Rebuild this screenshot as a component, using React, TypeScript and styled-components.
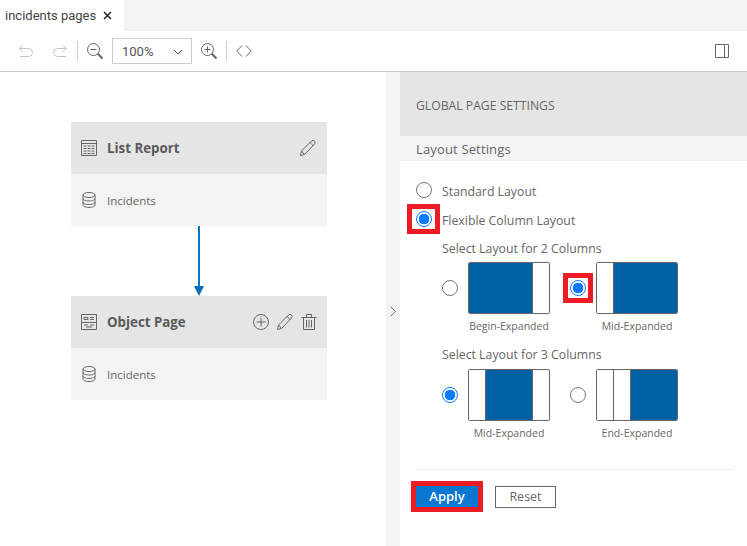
import styled, { createGlobalStyle } from 'styled-components';

const GlobalStyle = createGlobalStyle`
  html, body {
    margin: 0;
    padding: 0;
    height: 100%;
    background: #fff;
    overflow: hidden;
  }
  #root {
    height: 100%;
  }
`;

const Page = styled.div`
  width: 747px;
  height: 546px;
  display: flex;
  flex-direction: column;
  font-family: 'Open Sans', 'Noto Sans', sans-serif;
  color: #666;
`;

const TabStrip = styled.div`
  height: 31px;
  background: #f3f3f3;
  display: flex;
`;

const Tab = styled.div`
  width: 124px;
  box-sizing: border-box;
  background: #fff;
  padding-left: 5px;
  display: flex;
  align-items: center;
  gap: 7px;
  font-family: Roboto, sans-serif;
  font-size: 13px;
  color: #444;
`;

const Toolbar = styled.div`
  height: 41px;
  flex: none;
  box-sizing: border-box;
  padding: 0 8px 0 9px;
  display: flex;
  align-items: center;
  border-bottom: 1px solid #ccc;
`;

const ToolButton = styled.div<{ $end?: boolean }>`
  width: 34px;
  height: 26px;
  display: flex;
  align-items: center;
  justify-content: center;
  margin-left: ${(p) => (p.$end ? 'auto' : '0')};
`;

const Separator = styled.div`
  width: 1px;
  height: 20px;
  background: #ccc;
`;

const ZoomSelect = styled.div`
  width: 80px;
  height: 26px;
  box-sizing: border-box;
  border: 1px solid #ccc;
  display: flex;
  align-items: center;
  justify-content: space-between;
  padding: 1px 8px 0 9px;
  font-family: Roboto, sans-serif;
  font-size: 13px;
  color: #555;
`;

const Workspace = styled.div`
  flex: 1;
  display: flex;
  min-height: 0;
`;

const Canvas = styled.div`
  width: 386px;
  box-sizing: border-box;
  padding: 50px 59px 0 71px;
  display: flex;
  flex-direction: column;
`;

const Card = styled.div`
  width: 256px;
  background: #f3f3f3;
`;

const CardHead = styled.div`
  height: 52px;
  background: #e5e5e5;
  box-sizing: border-box;
  padding: 0 10px 0 10px;
  display: flex;
  align-items: center;
`;

const CardTitle = styled.div`
  margin-left: 10px;
  font-size: 13.3px;
  font-weight: 700;
  color: #5a5a5a;
  flex: 1;
`;

const CardActions = styled.div`
  display: flex;
  align-items: center;
  gap: 7px;
`;

const CardBody = styled.div`
  height: 52px;
  box-sizing: border-box;
  padding: 0 10px 0 11px;
  display: flex;
  align-items: center;
  gap: 11px;
  font-size: 11.5px;
  color: #666;
`;

const Connector = styled.div`
  width: 256px;
  height: 70px;
  display: flex;
  flex-direction: column;
  align-items: center;
`;

const ConnectorLine = styled.div`
  width: 2px;
  flex: 1;
  background: #0a78c8;
`;

const ConnectorHead = styled.div`
  width: 0;
  height: 0;
  border-left: 5px solid transparent;
  border-right: 5px solid transparent;
  border-top: 10px solid #0a6cb8;
`;

const Splitter = styled.div`
  width: 14px;
  background: #f3f3f3;
  display: flex;
  align-items: center;
  justify-content: center;
  padding-top: 4px;
  box-sizing: border-box;
`;

const Panel = styled.div`
  flex: 1;
  display: flex;
  flex-direction: column;
`;

const PanelHead = styled.div`
  height: 64px;
  box-sizing: border-box;
  background: #e5e5e5;
  padding: 2px 0 0 16px;
  display: flex;
  align-items: center;
  font-size: 12.2px;
  color: #666;
`;

const SectionHead = styled.div`
  height: 25px;
  background: #f3f3f3;
  padding-left: 16px;
  display: flex;
  align-items: center;
  font-size: 13px;
  letter-spacing: 0.15px;
  color: #666;
`;

const Form = styled.div`
  padding: 21px 13px 0 16px;
  display: flex;
  flex-direction: column;
`;

const RadioRow = styled.div<{ $gapTop?: number }>`
  height: 16px;
  margin-top: ${(p) => p.$gapTop ?? 0}px;
  display: flex;
  align-items: center;
  gap: 10px;
  font-size: 12.3px;
  color: #666;
`;

const RowText = styled.span`
  padding-top: 2px;
`;

const Radio = styled.span<{ $checked?: boolean }>`
  width: 16px;
  height: 16px;
  box-sizing: border-box;
  border-radius: 50%;
  flex: none;
  border: 1px solid ${(p) => (p.$checked ? '#0a7bff' : '#777')};
  background: ${(p) =>
    p.$checked ? 'radial-gradient(circle, #0a7bff 0 5px, #fff 5.6px)' : '#fff'};
`;

const Marked = styled.span<{ $left: number; $right: number }>`
  position: relative;
  display: flex;
  flex: none;

  &::before {
    content: '';
    position: absolute;
    top: -7px;
    bottom: -7px;
    left: -${(p) => p.$left}px;
    right: -${(p) => p.$right}px;
    border: 5px solid #ed1c24;
  }
`;

const LayoutGroup = styled.div<{ $top: number }>`
  margin: ${(p) => p.$top}px 0 0 26px;
`;

const GroupTitle = styled.div`
  height: 20px;
  line-height: 21px;
  font-size: 12.3px;
  color: #666;
`;

const OptionRow = styled.div<{ $top: number }>`
  margin-top: ${(p) => p.$top}px;
  display: flex;
  gap: 20px;
`;

const Option = styled.div`
  display: grid;
  grid-template-columns: 16px 82px;
  column-gap: 10px;
  row-gap: 4px;
  align-items: center;
`;

const OptionLabel = styled.div`
  grid-column: 2;
  font-size: 10.5px;
  line-height: 16px;
  text-align: center;
  white-space: nowrap;
  color: #666;
`;

const Thumb = styled.div`
  width: 82px;
  height: 52px;
  box-sizing: border-box;
  border: 1px solid #666;
  border-radius: 2px;
  display: flex;
  overflow: hidden;
  background: #fff;
`;

const Column = styled.div<{ $filled?: boolean }>`
  flex: ${(p) => (p.$filled ? 1 : '0 0 16px')};
  background: ${(p) => (p.$filled ? '#0062a5' : '#fff')};

  & + & {
    border-left: 1px solid #666;
  }
`;

const Footer = styled.div`
  margin-top: 28px;
  padding-top: 16px;
  border-top: 1px solid #eee;
  display: flex;
  align-items: flex-start;
  gap: 17px;
`;

const ApplyButton = styled.div`
  width: 62px;
  height: 21px;
  background: #0a78d0;
  color: #fff;
  font-size: 13px;
  font-weight: 600;
  text-align: center;
  line-height: 21px;
  box-shadow: 0 0 0 5px #ed1c24;
`;

const ResetButton = styled.div`
  width: 61px;
  height: 22px;
  box-sizing: border-box;
  border: 1px solid #666;
  font-size: 12.5px;
  text-align: center;
  line-height: 20px;
  color: #666;
`;

const Icon = styled.svg`
  display: block;
  fill: none;
  stroke: currentColor;
  stroke-width: 1;
  flex: none;
`;

const MutedIcon = styled(Icon)`
  color: #c4c4c4;
`;

function UndoIcon() {
  return (
    <MutedIcon width="16" height="14" viewBox="0 0 16 14">
      <path d="M5 1 1.500 4.500 5 8M1.500 4.500h9a4 4 0 0 1 0 8H2" />
    </MutedIcon>
  );
}

function RedoIcon() {
  return (
    <MutedIcon width="16" height="14" viewBox="0 0 16 14">
      <path d="M11 1l3.500 3.500L11 8M14.500 4.500h-9a4 4 0 0 0 0 8H14" />
    </MutedIcon>
  );
}

function ZoomIcon({ plus }: { plus?: boolean }) {
  return (
    <Icon width="18" height="18" viewBox="0 0 18 18" style={{ color: '#666' }}>
      <circle cx="7.500" cy="7.500" r="6" />
      <path d="M4.500 7.500h6" />
      {plus && <path d="M7.500 4.500v6" />}
      <path d="M11.800 11.800 16.500 16.500" strokeWidth="2" />
    </Icon>
  );
}

function CodeIcon() {
  return (
    <Icon width="16" height="14" viewBox="0 0 16 14" style={{ color: '#666' }}>
      <path d="M6 1.500 .8 7 6 12.500M10 1.500 15.200 7 10 12.500" />
    </Icon>
  );
}

function PanelIcon() {
  return (
    <Icon width="14" height="14" viewBox="0 0 14 14" style={{ color: '#666' }}>
      <path d="M.5.500h13v13H.5zM9.500.500v13" />
    </Icon>
  );
}

function CloseIcon() {
  return (
    <Icon width="9" height="9" viewBox="0 0 9 9" style={{ color: '#222' }}>
      <path d="M1 1l7 7M8 1 1 8" strokeWidth="1.500" />
    </Icon>
  );
}

function ChevronDown() {
  return (
    <Icon width="10" height="6" viewBox="0 0 10 6" style={{ color: '#555' }}>
      <path d="M1 1l4 4 4-4" />
    </Icon>
  );
}

function ChevronRight() {
  return (
    <Icon width="6" height="11" viewBox="0 0 6 11" style={{ color: '#777' }}>
      <path d="M.7.700 5.300 5.500.7 10.300" />
    </Icon>
  );
}

function TableIcon() {
  return (
    <Icon width="16" height="16" viewBox="0 0 16 16">
      <path d="M.5.500h15v15H.5zM.5 3.500h15" />
      <path d="M2.500 6h11M2.500 8.500h11M2.500 11h11M2.500 13.500h11" strokeDasharray="3 1" />
    </Icon>
  );
}

function ObjectPageIcon() {
  return (
    <Icon width="16" height="16" viewBox="0 0 16 16">
      <path d="M.5.500h15v15H.5zM.5 8.500h15M3 3.500h4v2H3zM9 3.500h4M9 5.500h4M3 11h4M9 11h4M5 13h6" />
    </Icon>
  );
}

function DatabaseIcon() {
  return (
    <Icon width="14" height="16" viewBox="0 0 14 16">
      <ellipse cx="7" cy="3" rx="6" ry="2.500" />
      <path d="M1 3v10c0 1.400 2.700 2.500 6 2.500s6-1.100 6-2.500V3M1 6.500c0 1.400 2.700 2.500 6 2.500s6-1.100 6-2.500M1 10c0 1.400 2.700 2.500 6 2.500s6-1.100 6-2.500" />
    </Icon>
  );
}

function PencilIcon() {
  return (
    <Icon width="18" height="18" viewBox="0 0 18 18">
      <path d="M1.500 16.500 2.500 12 12.500 2a2 2 0 0 1 3 3L5.500 15.500zM2.500 12 5.500 15.500M11 3.500l3.500 3.500" />
    </Icon>
  );
}

function PlusCircleIcon() {
  return (
    <Icon width="16" height="16" viewBox="0 0 16 16">
      <circle cx="8" cy="8" r="7.500" />
      <path d="M8 3.500v9M3.500 8h9" />
    </Icon>
  );
}

function TrashIcon() {
  return (
    <Icon width="16" height="16" viewBox="0 0 16 16">
      <path d="M.5 3.500h15M5.500 3.500v-3h5v3M2.500 3.500v12h11v-12M5.500 6v7.500M8 6v7.500M10.500 6v7.500" />
    </Icon>
  );
}

function EntityCard({
  title,
  icon,
  actions,
}: {
  title: string;
  icon: React.ReactNode;
  actions: React.ReactNode;
}) {
  return (
    <Card>
      <CardHead>
        {icon}
        <CardTitle>{title}</CardTitle>
        <CardActions>{actions}</CardActions>
      </CardHead>
      <CardBody>
        <DatabaseIcon />
        Incidents
      </CardBody>
    </Card>
  );
}

function LayoutOption({
  label,
  columns,
  radio,
}: {
  label: string;
  columns: boolean[];
  radio: React.ReactNode;
}) {
  return (
    <Option>
      {radio}
      <Thumb>
        {columns.map((filled, i) => (
          <Column key={i} $filled={filled} />
        ))}
      </Thumb>
      <OptionLabel>{label}</OptionLabel>
    </Option>
  );
}

export default function App() {
  return (
    <Page>
      <GlobalStyle />
      <TabStrip>
        <Tab>
          incidents pages
          <CloseIcon />
        </Tab>
      </TabStrip>
      <Toolbar>
        <ToolButton>
          <UndoIcon />
        </ToolButton>
        <ToolButton>
          <RedoIcon />
        </ToolButton>
        <Separator />
        <ToolButton>
          <ZoomIcon />
        </ToolButton>
        <ZoomSelect>
          100%
          <ChevronDown />
        </ZoomSelect>
        <ToolButton>
          <ZoomIcon plus />
        </ToolButton>
        <Separator />
        <ToolButton>
          <CodeIcon />
        </ToolButton>
        <ToolButton $end>
          <PanelIcon />
        </ToolButton>
      </Toolbar>
      <Workspace>
        <Canvas>
          <EntityCard title="List Report" icon={<TableIcon />} actions={<PencilIcon />} />
          <Connector>
            <ConnectorLine />
            <ConnectorHead />
          </Connector>
          <EntityCard
            title="Object Page"
            icon={<ObjectPageIcon />}
            actions={
              <>
                <PlusCircleIcon />
                <PencilIcon />
                <TrashIcon />
              </>
            }
          />
        </Canvas>
        <Splitter>
          <ChevronRight />
        </Splitter>
        <Panel>
          <PanelHead>GLOBAL PAGE SETTINGS</PanelHead>
          <SectionHead>Layout Settings</SectionHead>
          <Form>
            <RadioRow>
              <Radio />
              <RowText>Standard Layout</RowText>
            </RadioRow>
            <RadioRow $gapTop={13}>
              <Marked $left={9} $right={8}>
                <Radio $checked />
              </Marked>
              <RowText>Flexible Column Layout</RowText>
            </RadioRow>
            <LayoutGroup $top={11}>
              <GroupTitle>Select Layout for 2 Columns</GroupTitle>
              <OptionRow $top={4}>
                <LayoutOption
                  label="Begin-Expanded"
                  columns={[true, false]}
                  radio={<Radio />}
                />
                <LayoutOption
                  label="Mid-Expanded"
                  columns={[false, true]}
                  radio={
                    <Marked $left={7} $right={7}>
                      <Radio $checked />
                    </Marked>
                  }
                />
              </OptionRow>
            </LayoutGroup>
            <LayoutGroup $top={10}>
              <GroupTitle>Select Layout for 3 Columns</GroupTitle>
              <OptionRow $top={5}>
                <LayoutOption
                  label="Mid-Expanded"
                  columns={[false, true, false]}
                  radio={<Radio $checked />}
                />
                <LayoutOption
                  label="End-Expanded"
                  columns={[false, false, true]}
                  radio={<Radio />}
                />
              </OptionRow>
            </LayoutGroup>
            <Footer>
              <ApplyButton>Apply</ApplyButton>
              <ResetButton>Reset</ResetButton>
            </Footer>
          </Form>
        </Panel>
      </Workspace>
    </Page>
  );
}
